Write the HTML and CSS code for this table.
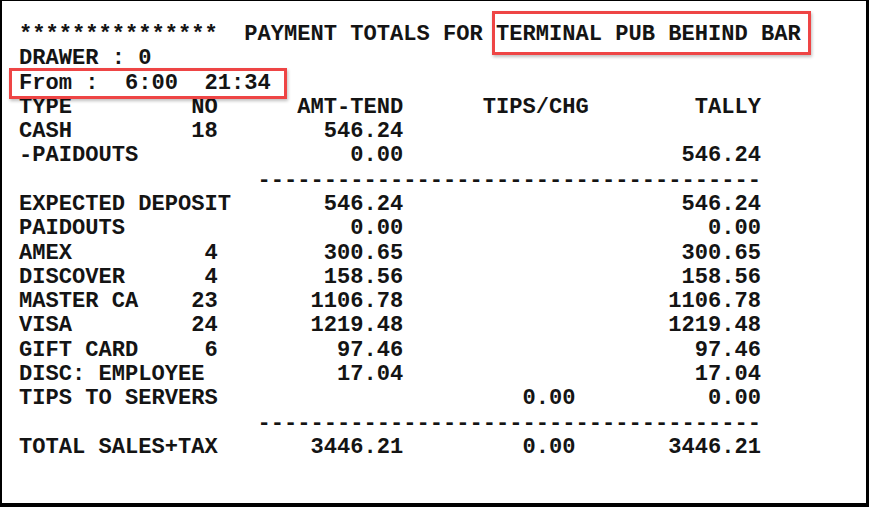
FILE: index.html
```html
<!DOCTYPE html>
<html>
<head>
<meta charset="utf-8">
<link rel="stylesheet" href="styles.css">
</head>
<body>
<div class="frame">
  <div class="report">
<div class="ln">***************  PAYMENT TOTALS FOR <span class="mark mark-title">TERMINAL PUB BEHIND BAR</span></div>
<div class="ln">DRAWER : 0</div>
<div class="ln"><span class="mark mark-from">From :  6:00  21:34</span></div>
<div class="ln">TYPE         NO      AMT-TEND      TIPS/CHG        TALLY</div>
<div class="ln">CASH         18        546.24</div>
<div class="ln">-PAIDOUTS                0.00                     546.24</div>
<div class="ln">                  --------------------------------------</div>
<div class="ln">EXPECTED DEPOSIT       546.24                     546.24</div>
<div class="ln">PAIDOUTS                 0.00                       0.00</div>
<div class="ln">AMEX          4        300.65                     300.65</div>
<div class="ln">DISCOVER      4        158.56                     158.56</div>
<div class="ln">MASTER CA    23       1106.78                    1106.78</div>
<div class="ln">VISA         24       1219.48                    1219.48</div>
<div class="ln">GIFT CARD     6         97.46                      97.46</div>
<div class="ln">DISC: EMPLOYEE          17.04                      17.04</div>
<div class="ln">TIPS TO SERVERS                       0.00          0.00</div>
<div class="ln">                  --------------------------------------</div>
<div class="ln">TOTAL SALES+TAX       3446.21         0.00       3446.21</div>
  </div>
</div>
</body>
</html>
```
FILE: styles.css
```css
html, body {
  margin: 0;
  padding: 0;
  background: #ffffff;
}

.frame {
  box-sizing: border-box;
  width: 869px;
  height: 507px;
  border-style: solid;
  border-color: #000000;
  border-width: 1px 3px 4px 2px;
  background: #ffffff;
  padding: 22px 0 0 17px;
}

.report {
  font-family: "Liberation Mono", "Courier New", monospace;
  font-weight: bold;
  font-size: 22.08px;
  line-height: 24.29px;
  color: #141414;
}

.ln {
  white-space: pre;
  height: 24.29px;
}

.mark {
  position: relative;
}

.mark::before {
  content: "";
  position: absolute;
  box-sizing: border-box;
  border: 3px solid #ee4545;
  box-shadow: 1px 2px 3px rgba(0, 0, 0, 0.25);
}

.mark-title::before {
  top: -11px;
  bottom: -8px;
  left: -4px;
  right: -10px;
}

.mark-from::before {
  top: -3px;
  bottom: -3px;
  left: -10px;
  right: -16px;
}
```
